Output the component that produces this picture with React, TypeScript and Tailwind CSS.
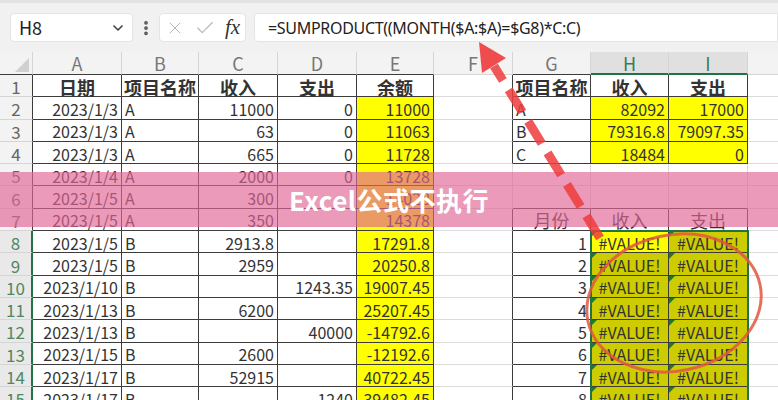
import { Check, ChevronDown, EllipsisVertical, X } from "lucide-react";

// A..I, one row per spreadsheet line
const sheet: string[][] = [
  ["日期", "项目名称", "收入", "支出", "余额", "", "项目名称", "收入", "支出"],
  ["2023/1/3", "A", "11000", "0", "11000", "", "A", "82092", "17000"],
  ["2023/1/3", "A", "63", "0", "11063", "", "B", "79316.8", "79097.35"],
  ["2023/1/3", "A", "665", "0", "11728", "", "C", "18484", "0"],
  ["2023/1/4", "A", "2000", "0", "13728", "", "", "", ""],
  ["2023/1/5", "A", "300", "", "14028", "", "", "", ""],
  ["2023/1/5", "A", "350", "", "14378", "", "月份", "收入", "支出"],
  ["2023/1/5", "B", "2913.8", "", "17291.8", "", "1", "#VALUE!", "#VALUE!"],
  ["2023/1/5", "B", "2959", "", "20250.8", "", "2", "#VALUE!", "#VALUE!"],
  ["2023/1/10", "B", "", "1243.35", "19007.45", "", "3", "#VALUE!", "#VALUE!"],
  ["2023/1/13", "B", "6200", "", "25207.45", "", "4", "#VALUE!", "#VALUE!"],
  ["2023/1/13", "B", "", "40000", "-14792.6", "", "5", "#VALUE!", "#VALUE!"],
  ["2023/1/15", "B", "2600", "", "-12192.6", "", "6", "#VALUE!", "#VALUE!"],
  ["2023/1/17", "B", "52915", "", "40722.45", "", "7", "#VALUE!", "#VALUE!"],
  ["2023/1/17", "B", "", "1240", "39482.45", "", "8", "#VALUE!", "#VALUE!"],
];

const letters = ["A", "B", "C", "D", "E", "F", "G", "H", "I"];

// r: 1..15, c: 0..8
function inTable(r: number, c: number) {
  if (r < 1 || r > 15) return false;
  if (c >= 0 && c <= 4) return true;
  if (c >= 6 && c <= 8) return r <= 4 || r >= 7;
  return false;
}

function cellBg(r: number, c: number) {
  if (r === 8 && c === 7) return "bg-[#ffff00]";
  if (r >= 8 && (c === 7 || c === 8)) return "bg-[#cccc00]";
  if (c === 4 && r >= 2) return "bg-[#ffff00]";
  if ((c === 7 || c === 8) && r >= 2 && r <= 4) return "bg-[#ffff00]";
  return "bg-white";
}

function cellAlign(r: number, c: number, value: string) {
  if (value === "#VALUE!") return "justify-center";
  if (/^-?[\d./]+$/.test(value)) return "justify-end pr-[3px]";
  if (r === 1 || (r === 7 && c >= 6)) return "justify-center";
  return "justify-start pl-[3px]";
}

function Cell({ r, c, value }: { r: number; c: number; value: string }) {
  const darkRight = inTable(r, c) || inTable(r, c + 1);
  const darkBottom = inTable(r, c) || inTable(r + 1, c);
  const bold = r === 1 && value !== "";
  return (
    <div
      className={`relative flex items-center overflow-visible whitespace-nowrap border-r border-b text-[16px] leading-none text-[#333] ${
        darkRight ? "border-r-[#3c3c3c]" : "border-r-[#dcdcdc]"
      } ${darkBottom ? "border-b-[#3c3c3c]" : "border-b-[#dcdcdc]"} ${cellBg(r, c)} ${cellAlign(r, c, value)} ${
        bold ? "text-[18px] font-bold text-[#111]" : ""
      } ${r === 7 && c >= 6 ? "text-[18px]" : ""}`}
    >
      {value === "#VALUE!" && (
        <span className="absolute top-0 left-0 h-0 w-0 border-t-[6px] border-r-[6px] border-t-[#1a7a2e] border-r-transparent" />
      )}
      <span className="pt-[2px]">{value}</span>
    </div>
  );
}

function Toolbar() {
  return (
    <div className="flex h-[52px] items-center border-t-[3px] border-t-[#e2e2e2] bg-[#f1f1f1] pl-[10px]">
      <div className="flex h-[29px] w-[123px] items-center justify-between rounded-[4px] border border-[#e4e4e4] bg-white pr-[6px] pl-[8px] text-[18px] text-[#222]">
        <span>H8</span>
        <ChevronDown size={16} strokeWidth={2.5} className="text-[#444]" />
      </div>
      <EllipsisVertical size={18} strokeWidth={3} className="mx-[4px] text-[#555]" />
      <div className="flex h-[29px] w-[87px] items-center gap-[9px] rounded-[4px] border border-[#e4e4e4] bg-white pl-[5px]">
        <X size={20} strokeWidth={1.2} className="text-[#b5b5b5]" />
        <Check size={22} strokeWidth={1.2} className="text-[#b5b5b5]" />
        <span className="font-['Liberation_Serif',serif] text-[21px] leading-none text-[#333] italic">
          fx
        </span>
      </div>
      <div className="ml-[8px] flex h-[29px] flex-1 items-center rounded-l-[4px] border border-[#e4e4e4] bg-white pl-[13px] font-['Noto_Sans',sans-serif] text-[16px] tracking-[-0.3px] text-[#222]">
        =SUMPRODUCT((MONTH($A:$A)=$G8)*C:C)
      </div>
    </div>
  );
}

function Grid() {
  return (
    <div className="grid grid-cols-[33px_89px_77px_79px_79px_77px_79px_78px_78px_79px_1fr] grid-rows-[23px_repeat(15,22.3px)]">
      <div className="relative border-r border-b border-r-[#d5d5d5] border-b-[#3c3c3c] bg-[#f3f3f3]">
        <svg width="33" height="23" className="absolute inset-0">
          <polygon points="29,6 29,20 15,20" fill="#d0d0d0" />
        </svg>
      </div>
      {letters.map((l, c) => {
        const sel = c === 7 || c === 8;
        return (
          <div
            key={l}
            className={`flex items-center justify-center border-r border-r-[#d5d5d5] text-[18px] leading-none ${
              sel ? "border-b-2 border-b-[#217346] bg-[#e0e0e0] text-[#3a7d52]" : "border-b bg-[#f3f3f3] text-[#777]"
            } ${!sel && inTable(1, c) ? "border-b-[#3c3c3c]" : ""} ${!sel && !inTable(1, c) ? "border-b-[#d5d5d5]" : ""}`}
          >
            {l}
          </div>
        );
      })}
      <div className="border-b border-b-[#d5d5d5] bg-[#f3f3f3]" />
      {sheet.map((row, i) => {
        const r = i + 1;
        const sel = r >= 8;
        return [
          <div
            key={`h${r}`}
            className={`flex items-center justify-center border-b border-b-[#d5d5d5] text-[17px] leading-none ${
              sel
                ? "border-r-2 border-r-[#217346] bg-[#e9e9e9] text-[#4f8763]"
                : "border-r border-r-[#3c3c3c] bg-[#f3f3f3] text-[#666]"
            }`}
          >
            <span className="pt-[2px]">{r}</span>
          </div>,
          ...row.map((v, c) => <Cell key={`${r}-${c}`} r={r} c={c} value={v} />),
          <div key={`j${r}`} className="border-b border-b-[#dcdcdc] bg-white" />,
        ];
      })}
    </div>
  );
}

export default function App() {
  return (
    <div className="relative h-[400px] w-[778px] overflow-hidden bg-white font-['Noto_Sans_CJK_SC','Noto_Sans',sans-serif]">
      <Toolbar />
      <Grid />

      {/* selection H8:I15 */}
      <div className="pointer-events-none absolute top-[230px] left-[590px] h-[180px] w-[159px] border-2 border-[#217346]" />

      {/* title band */}
      <div className="absolute top-[172px] left-0 flex h-[55px] w-full items-center justify-center bg-[rgba(224,101,151,0.66)]">
        <span className="text-[26px] font-bold tracking-[0.5px] text-white">Excel公式不执行</span>
      </div>

      {/* annotation arrow and circle */}
      <svg className="pointer-events-none absolute inset-0" width="778" height="400" viewBox="0 0 778 400">
        <line
          x1="600"
          y1="238"
          x2="494"
          y2="66"
          stroke="#ee3b3b"
          strokeOpacity="0.85"
          strokeWidth="9"
          strokeDasharray="26 11"
        />
        <polygon points="479,42 506,58 482,73" fill="#ee3b3b" fillOpacity="0.9" />
        <ellipse
          cx="674"
          cy="303"
          rx="88"
          ry="68"
          transform="rotate(-12 674 303)"
          fill="none"
          stroke="#e0573f"
          strokeOpacity="0.85"
          strokeWidth="3"
        />
      </svg>
    </div>
  );
}
